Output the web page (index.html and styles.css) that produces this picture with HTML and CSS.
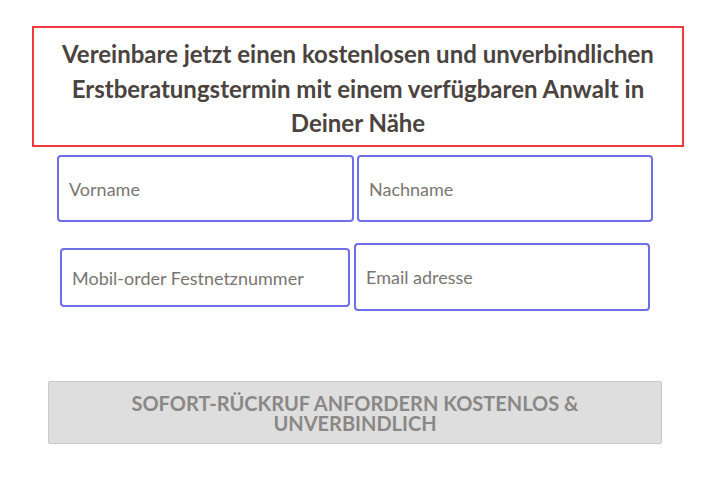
FILE: index.html
```html
<!DOCTYPE html>
<html lang="de">
<head>
<meta charset="utf-8">
<link rel="stylesheet" href="styles.css">
</head>
<body>
<div class="page">
  <div class="headline">Vereinbare jetzt einen kostenlosen und unverbindlichen Erstberatungstermin mit einem verfügbaren Anwalt in Deiner Nähe</div>
  <div class="row row-one">
    <div class="field f-vorname"><span class="ph">Vorname</span></div>
    <div class="field f-nachname"><span class="ph">Nachname</span></div>
  </div>
  <div class="row row-two">
    <div class="field f-mobil"><span class="ph">Mobil-order Festnetznummer</span></div>
    <div class="field f-email"><span class="ph">Email adresse</span></div>
  </div>
  <div class="submit">SOFORT-RÜCKRUF ANFORDERN KOSTENLOS &amp; UNVERBINDLICH</div>
</div>
</body>
</html>
```
FILE: styles.css
```css
html, body {
  margin: 0;
  padding: 0;
  background: #ffffff;
}
.page {
  width: 710px;
  height: 504px;
  font-family: Lato, "Open Sans", sans-serif;
  padding-top: 26px;
  box-sizing: border-box;
}
.headline {
  margin-left: 32px;
  width: 652px;
  height: 121px;
  box-sizing: border-box;
  border: 2px solid #f23a3a;
  font-size: 24px;
  font-weight: 700;
  color: #4a4340;
  text-align: center;
  line-height: 34.5px;
  padding: 9px 20px 0;
}
.row {
  display: flex;
  align-items: flex-start;
}
.row-one {
  margin-top: 8px;
  margin-left: 57px;
  gap: 3px;
}
.row-two {
  margin-top: 21px;
  margin-left: 60px;
}
.field {
  box-sizing: border-box;
  border: 2px solid #6e6ee6;
  border-radius: 4px;
  display: flex;
  align-items: center;
  padding-left: 10px;
  font-size: 18px;
  color: #7a7572;
}
.f-vorname { width: 297px; height: 67px; }
.f-nachname { width: 296px; height: 67px; }
.f-mobil { width: 290px; height: 59px; margin-top: 5px; }
.f-email { width: 296px; height: 68px; margin-left: 4px; }
.submit {
  margin-top: 70px;
  margin-left: 48px;
  width: 614px;
  height: 63px;
  box-sizing: border-box;
  background: #dedede;
  border: 1px solid #c9c9c9;
  border-radius: 2px;
  color: #8a8886;
  font-size: 20px;
  font-weight: 700;
  text-align: center;
  line-height: 20px;
  padding: 11px 70px 0;
}
```
